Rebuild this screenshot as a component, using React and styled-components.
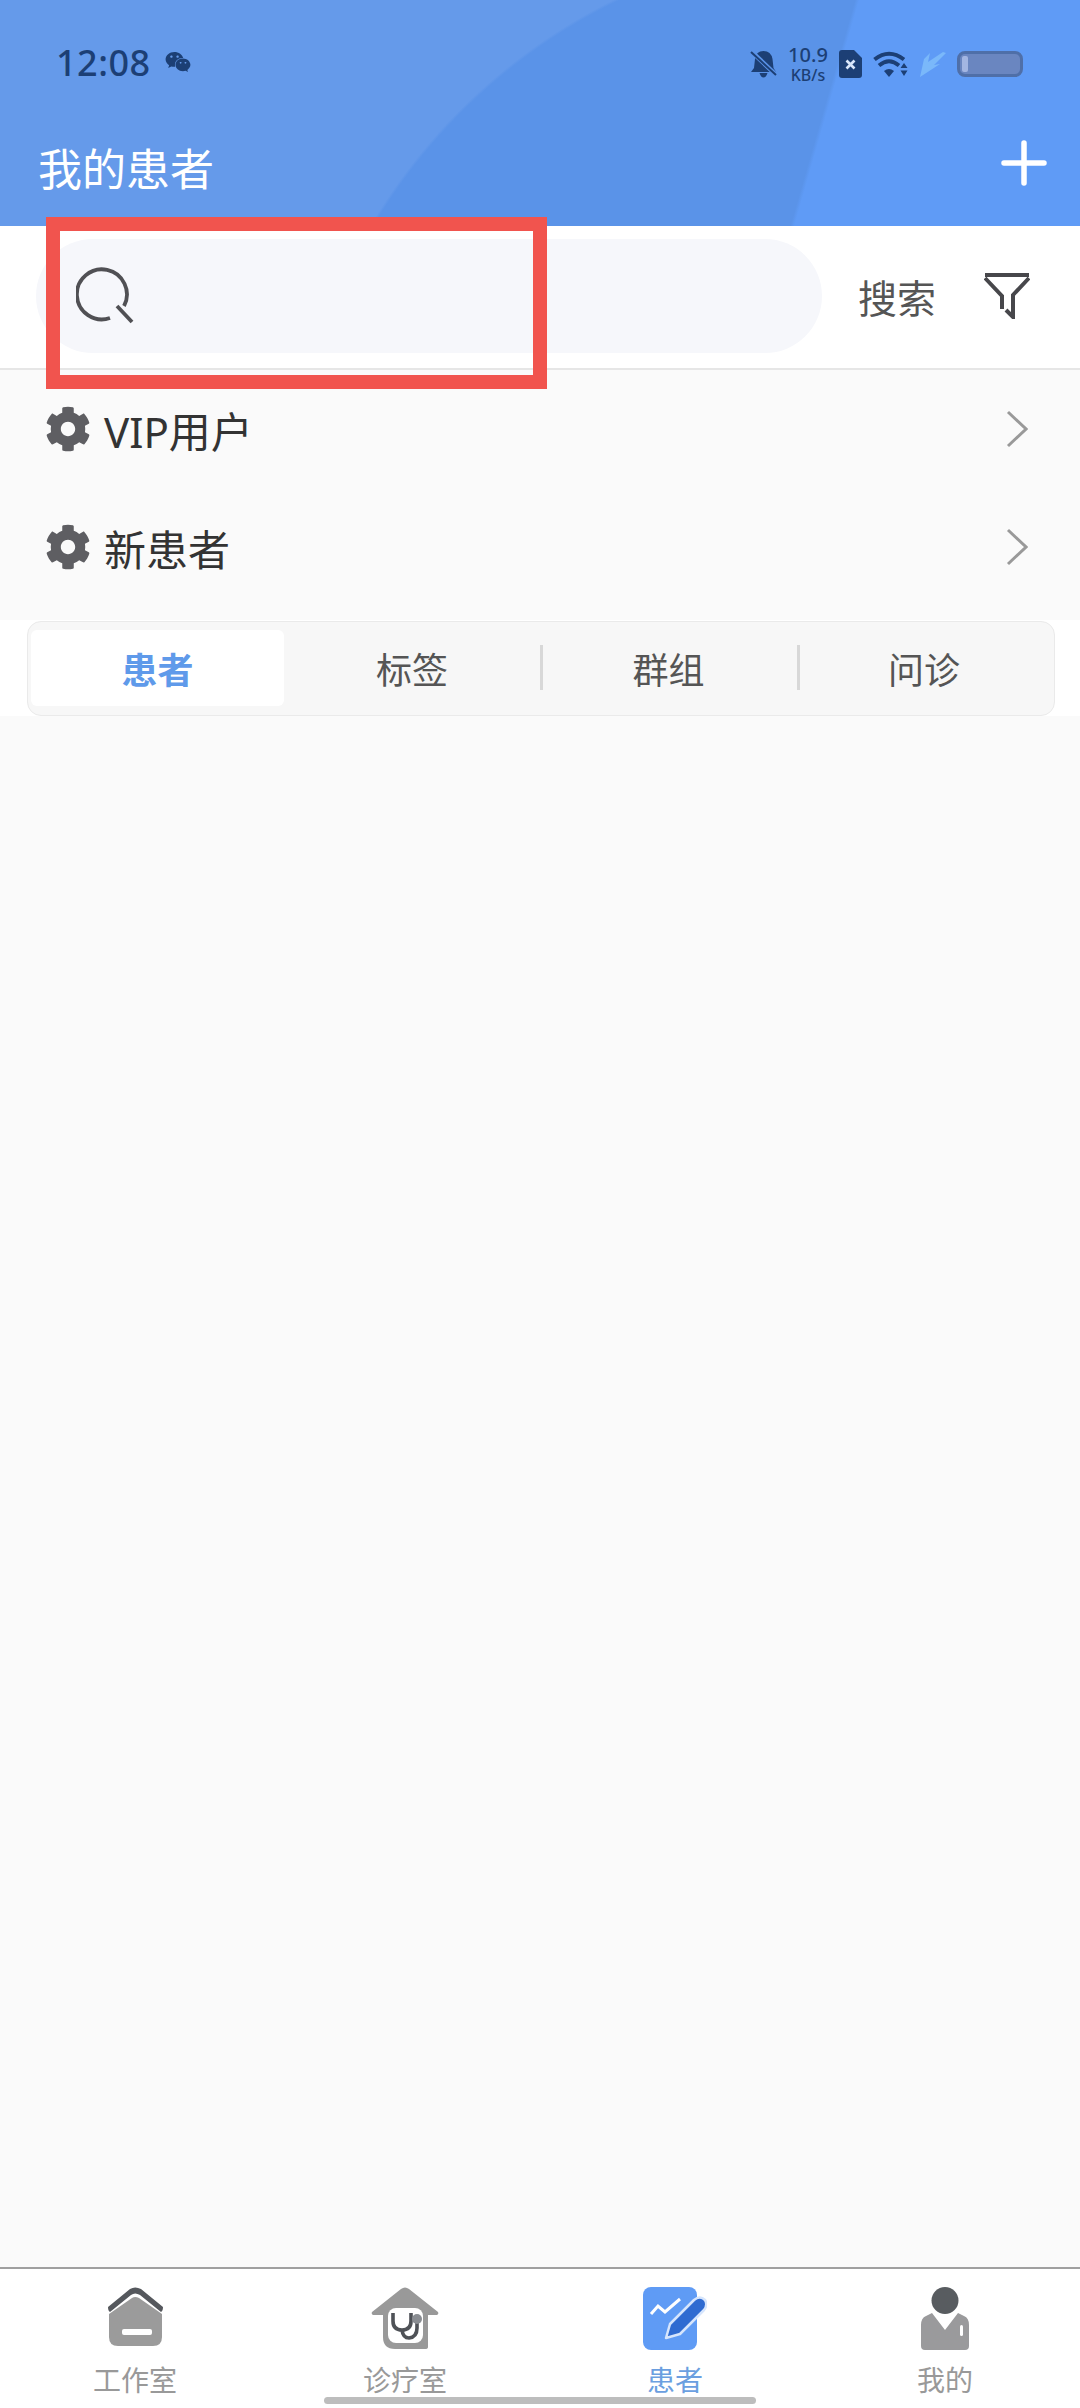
import React from 'react'
import styled, {createGlobalStyle} from 'styled-components';
import {FaCog, FaWeixin} from 'react-icons/fa';

const GlobalStyle = createGlobalStyle`
	html, body {
		margin: 0;
		padding: 0;
		background: #fafafa;
		font-family: "Noto Sans", "Noto Sans CJK SC", sans-serif;
	}
`

const HomeIcon = () => (
	<svg width="55" height="60" viewBox="0 0 55 60">
		<path d="M0 20 L22 2 Q27 -1 33 2 L55 20 Q55 24 53 25 L32 8 Q27 5 23 8 L2 25 Q0 24 0 20 Z" fill="#55585d" />
		<path d="M1 27 L24 11 Q27 9 31 11 L54 27 V50 Q54 59 45 59 H10 Q1 59 1 50 Z" fill="#9b9b9b" />
		<rect x="14" y="42" width="30" height="6" rx="2" fill="#fff" />
	</svg>
)

const ClinicIcon = () => (
	<svg width="68" height="62" viewBox="0 0 68 62">
		<path d="M1 25 L30 2 Q34 -1 38 2 L67 25 Q68 27 66 28 L57 28 V60 Q57 62 54 62 H24 Q12 62 12 50 V28 L2 28 Q0 27 1 25 Z" fill="#999" />
		<rect x="17" y="21" width="35" height="35" rx="8" fill="#fff" />
		<path d="M22 26 V34 Q22 43 31 43 Q40 43 40 34 V26" fill="none" stroke="#4f5257" strokeWidth="3.6" />
		<path d="M31 43 Q32 51 38 51 Q46 50 46 41 V35" fill="none" stroke="#4f5257" strokeWidth="3.6" />
		<circle cx="46" cy="32" r="5" fill="#8a8d92" />
	</svg>
)

const PatientIcon = () => (
	<svg width="64" height="64" viewBox="0 0 64 64">
		<rect x="0" y="0" width="54" height="63" rx="8" fill="#5f9bf5" />
		<path d="M8 27 L15 19 L22 25 L37 12" fill="none" stroke="#fff" strokeWidth="3" />
		<path d="M51 13 Q57 8 62 13 Q65 18 61 23 L37 47 L23 51 L27 37 Z" fill="#2f6bd1" stroke="#d6e5fc" strokeWidth="2.5" strokeLinejoin="round" />
	</svg>
)

const MineIcon = () => (
	<svg width="50" height="64" viewBox="0 0 50 64">
		<path d="M12 26 L25 43 L38 26 L44 29 Q49 31 49 38 V59 Q49 63 45 63 H5 Q1 63 1 59 V38 Q1 31 6 29 Z" fill="#9a9a9c" />
		<circle cx="25" cy="13.5" r="13.5" fill="#585c60" />
		<rect x="40" y="38" width="3" height="11" rx="1.5" fill="#fff" />
	</svg>
)

const navItems = [
	{label: '工作室', Icon: HomeIcon},
	{label: '诊疗室', Icon: ClinicIcon},
	{label: '患者', Icon: PatientIcon, active: true},
	{label: '我的', Icon: MineIcon},
]

const App = () => {
	return (
		<Page>
			<GlobalStyle />
			<Header>
				<StatusBar>
					<StatusLeft>
						<Clock>12:08</Clock>
						<FaWeixin size={26} color="#1c3f75" />
					</StatusLeft>
					<StatusRight>
						<svg width="27" height="28" viewBox="0 0 27 28">
							<path d="M13.5 1 Q21 1 22.5 9 L23.5 18 L26 22 H1 L4 18 L5 9 Q6 1 13.5 1 Z M9.5 23 H17.5 Q16 27.5 13.5 27.5 Q11 27.5 9.5 23 Z" fill="#1c3f75" />
							<path d="M1 1 L26 25" stroke="#5a93e8" strokeWidth="4.5" />
							<path d="M1 2 L26 25" stroke="#1c3f75" strokeWidth="2" />
						</svg>
						<Speed>
							<SpeedValue>10.9</SpeedValue>
							<SpeedUnit>KB/s</SpeedUnit>
						</Speed>
						<svg width="23" height="28" viewBox="0 0 23 28">
							<path d="M3 0 H15 L23 8 V25 Q23 28 20 28 H3 Q0 28 0 25 V3 Q0 0 3 0 Z" fill="#1c3f75" />
							<path d="M7.5 10.5 L15.5 18.5 M15.5 10.5 L7.5 18.5" stroke="#d8e6fb" strokeWidth="2.6" />
						</svg>
						<svg width="35" height="26" viewBox="0 0 35 26">
							<path d="M1.5 8.5 Q16 -3 31 8.5" fill="none" stroke="#1c3f75" strokeWidth="4" />
							<path d="M6 14.5 Q16 6 26 14.5" fill="none" stroke="#1c3f75" strokeWidth="3.8" />
							<path d="M11 20 L16 26 L21 20 Q16 16 11 20 Z" fill="#1c3f75" />
							<path d="M31 12 L34.5 17 H27.5 Z M27.5 19.5 H34.5 L31 25 Z" fill="#1c3f75" />
						</svg>
						<svg width="27" height="25" viewBox="0 0 27 25">
							<path d="M1 25 L5 7 L11 1 L9 10 L24 0 L27 1 L15 13 L21 12 L1 25 Z" fill="#7ab8fa" />
						</svg>
						<Battery><BatteryLevel /></Battery>
					</StatusRight>
				</StatusBar>
				<TitleRow>
					<Title>我的患者</Title>
					<PlusIcon width="46" height="46" viewBox="0 0 46 46">
						<path d="M23 3 V43 M3 23 H43" stroke="#fff" strokeWidth="5.5" strokeLinecap="round" />
					</PlusIcon>
				</TitleRow>
			</Header>

			<SearchBar>
				<SearchPill>
					<svg width="58" height="58" viewBox="0 0 58 58">
						<path d="M34 51 A25 25 0 1 1 48 39" fill="none" stroke="#505054" strokeWidth="3.8" />
						<path d="M41 39 L56 55" fill="none" stroke="#505054" strokeWidth="3.8" />
					</svg>
				</SearchPill>
				<SearchText>搜索</SearchText>
				<svg width="46" height="46" viewBox="0 0 46 46">
					<path d="M1 2 H45 M1 5 L18 23 V36 M45 5 L29 22 V44 L22 37" fill="none" stroke="#47474b" strokeWidth="4" />
				</svg>
			</SearchBar>

			<Row>
				<RowLabel><FaCog size={46} color="#5e5e62" />VIP用户</RowLabel>
				<Chevron />
			</Row>
			<Row>
				<RowLabel><FaCog size={46} color="#5e5e62" />新患者</RowLabel>
				<Chevron />
			</Row>

			<TabsWrap>
				<Tabs>
					<Tab $active>患者</Tab>
					<Tab>标签</Tab>
					<Tab $divider>群组</Tab>
					<Tab $divider>问诊</Tab>
				</Tabs>
			</TabsWrap>

			<Empty />

			<BottomNav>
				{navItems.map(({label, Icon, active}) => (
					<NavItem key={label} $active={active}>
						<NavIconBox><Icon /></NavIconBox>
						{label}
					</NavItem>
				))}
			</BottomNav>

			<HomeBar />
			<Annotation />
		</Page>
	)
};

export default App

const Chevron = () => (
	<svg width="22" height="38" viewBox="0 0 22 38">
		<path d="M2 2 L20 19 L2 36" fill="none" stroke="#999" strokeWidth="3" />
	</svg>
)

const Page = styled.div`
	position: relative;
	display: flex;
	flex-direction: column;
	width: 1080px;
	height: 2408px;
	overflow: hidden;
	background: #fafafa;
`
const Header = styled.header`
	display: flex;
	flex-direction: column;
	height: 226px;
	box-sizing: border-box;
	background:
		linear-gradient(106deg, transparent 822px, #5f9bf6 826px),
		radial-gradient(circle 580px at 870px 520px, #5a93e8 99.5%, transparent 100%),
		#659aea;
`
const StatusBar = styled.div`
	display: flex;
	justify-content: space-between;
	align-items: center;
	height: 36px;
	margin-top: 46px;
	padding: 0 57px 0 56px;
`
const StatusLeft = styled.div`
	display: flex;
	align-items: center;
	gap: 14px;
	margin-bottom: 4px;
`
const StatusRight = styled.div`
	display: flex;
	align-items: center;
	gap: 11px;
`
const Clock = styled.span`
	font-size: 36px;
	font-weight: 500;
	color: #1c3f75;
	letter-spacing: 0.5px;
`
const Speed = styled.div`
	display: flex;
	flex-direction: column;
	align-items: center;
	width: 40px;
	color: #1c3f75;
	font-weight: 500;
`
const SpeedValue = styled.div`
	height: 22px;
	font-size: 20px;
	line-height: 22px;
`
const SpeedUnit = styled.div`
	height: 18px;
	font-size: 16px;
	line-height: 18px;
`
const Battery = styled.div`
	width: 66px;
	height: 26px;
	box-sizing: border-box;
	padding: 2px;
	border: 3px solid #4f6fa8;
	border-radius: 8px;
	background: #6a86c0;
`
const BatteryLevel = styled.div`
	width: 6px;
	height: 100%;
	border-radius: 2px;
	background: #a3b6e2;
`
const TitleRow = styled.div`
	display: flex;
	justify-content: space-between;
	align-items: center;
	height: 62px;
	margin-top: 54px;
	padding: 0 33px 0 38px;
`
const Title = styled.h1`
	margin: 0;
	font-size: 44px;
	font-weight: 400;
	color: #fff;
`
const PlusIcon = styled.svg`
	margin-bottom: 8px;
`
const SearchBar = styled.div`
	display: flex;
	align-items: center;
	height: 144px;
	box-sizing: border-box;
	padding: 0 50px 2px 36px;
	background: #fff;
	border-bottom: 2px solid #e6e6e6;
`
const SearchPill = styled.div`
	display: flex;
	align-items: center;
	width: 786px;
	height: 114px;
	box-sizing: border-box;
	padding-left: 40px;
	border-radius: 57px;
	background: #f6f7fb;
`
const SearchText = styled.span`
	margin: 0 48px 0 36px;
	font-size: 39px;
	color: #555;
`
const Row = styled.div`
	display: flex;
	justify-content: space-between;
	align-items: center;
	height: 118px;
	padding: 0 52px 0 45px;
`
const RowLabel = styled.div`
	display: flex;
	align-items: center;
	gap: 13px;
	font-size: 42px;
	color: #333;
`
const TabsWrap = styled.div`
	padding: 15px 25px 0 27px;
	background: linear-gradient(#fafafa 14px, #fff 14px);
`
const Tabs = styled.div`
	display: grid;
	grid-template-columns: 253px 256px 257px 1fr;
	height: 95px;
	box-sizing: border-box;
	padding: 8px 3px 9px;
	border: 1px solid #eaeaea;
	border-radius: 14px;
	background: #f7f7f7;
`
const Tab = styled.div`
	position: relative;
	display: flex;
	justify-content: center;
	align-items: center;
	font-size: 36px;
	font-weight: ${p => (p.$active ? 700 : 400)};
	color: ${p => (p.$active ? '#5f9aea' : '#555')};
	background: ${p => (p.$active ? '#fff' : 'transparent')};
	border-radius: 6px;
	&::before {
		content: '';
		display: ${p => (p.$divider ? 'block' : 'none')};
		position: absolute;
		left: 0;
		top: 15px;
		bottom: 16px;
		width: 3px;
		background: #d8d8d8;
	}
`
const Empty = styled.div`
	flex: 1;
`
const BottomNav = styled.nav`
	display: grid;
	grid-template-columns: repeat(4, 1fr);
	height: 141px;
	box-sizing: border-box;
	padding-top: 18px;
	border-top: 2px solid #a0a0a0;
	background: #fff;
`
const NavItem = styled.div`
	display: flex;
	flex-direction: column;
	align-items: center;
	font-size: 28px;
	line-height: 36px;
	color: ${p => (p.$active ? '#6b9fe0' : '#999')};
`
const NavIconBox = styled.div`
	display: flex;
	justify-content: center;
	align-items: flex-start;
	height: 64px;
	margin-bottom: 11px;
`
const HomeBar = styled.div`
	position: absolute;
	left: 324px;
	bottom: 4px;
	width: 432px;
	height: 7px;
	border-radius: 4px;
	background: #bdbdbd;
`
const Annotation = styled.div`
	position: absolute;
	left: 46px;
	top: 217px;
	width: 501px;
	height: 172px;
	box-sizing: border-box;
	border: 14px solid #f1544e;
`
